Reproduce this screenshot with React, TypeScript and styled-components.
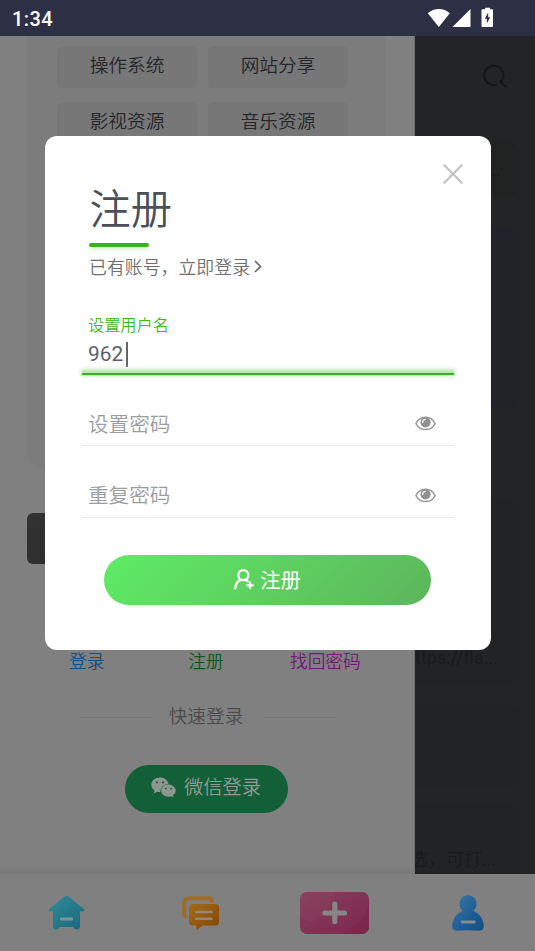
import React from "react";
import styled, { createGlobalStyle } from "styled-components";

const GlobalStyle = createGlobalStyle`
  * { box-sizing: border-box; }
  body {
    margin: 0;
    background: #808080;
    font-family: Roboto, "Noto Sans CJK SC", sans-serif;
    font-weight: 350;
    overflow: hidden;
  }
`;

const Screen = styled.div`
  width: 535px;
  height: 951px;
  display: flex;
  flex-direction: column;
  position: relative;
  overflow: hidden;
`;

const StatusBar = styled.header`
  height: 36px;
  flex: none;
  display: flex;
  align-items: center;
  justify-content: space-between;
  padding: 0 41px 0 12px;
  background: #2d2f45;
  color: #fff;
`;

const Clock = styled.span`
  font-size: 20px;
  line-height: 36px;
  font-weight: 500;
  letter-spacing: 0.4px;
  padding-top: 2px;
`;

const Content = styled.div`
  display: flex;
  height: 838px;
  flex: none;
`;

const Drawer = styled.aside`
  width: 415px;
  flex: none;
  display: flex;
  flex-direction: column;
  padding: 0 0 0 27px;
  background: linear-gradient(#808080 0, #808080 828px, #797979 838px);
  border-right: 1px solid #6f6f6f;
`;

const CategoryPanel = styled.div`
  width: 358px;
  height: 431px;
  padding: 10px 30px 0;
  display: grid;
  grid-template-columns: 140px 140px;
  grid-auto-rows: 42px;
  gap: 13.5px 11px;
  background: #7c7c7c;
  border-radius: 0 0 14px 14px;
`;

const Category = styled.div`
  border-radius: 6px;
  background: #777;
  color: #25272b;
  font-size: 18.7px;
  line-height: 41px;
  text-align: center;
`;

const DarkBanner = styled.div`
  width: 358px;
  height: 51px;
  margin-top: 46px;
  border-radius: 6px;
  background: linear-gradient(135deg, #323232, #1c1c1c);
`;

const AccountLinks = styled.div`
  display: flex;
  margin: 84px 0 0;
  width: 358px;
  height: 28px;
`;

const AccountLink = styled.span<{ $color: string }>`
  flex: 1;
  text-align: center;
  font-size: 17.7px;
  line-height: 29px;
  color: ${(p) => p.$color};
`;

const QuickLogin = styled.div`
  display: flex;
  align-items: center;
  width: 257px;
  height: 28px;
  margin: 26px 0 0 52px;
  color: #4b4b4b;
  font-size: 18.7px;
  justify-content: space-between;
  span { margin: -3px 3px 0 0; }
`;

const Rule = styled.i`
  width: 73px;
  height: 1px;
  margin-top: 3px;
  background: #777;
`;

const WechatButton = styled.div`
  display: flex;
  align-items: center;
  gap: 8px;
  width: 163px;
  height: 48px;
  margin: 35px 0 0 98px;
  padding: 0 0 2px 26px;
  border-radius: 24px;
  background: #135f37;
  color: #949a96;
  font-size: 19.3px;
  line-height: 44px;
  svg { margin-bottom: 1px; }
`;

const Backdrop = styled.main`
  flex: 1;
  display: flex;
  flex-direction: column;
  background: #222425;
  color: #191b1c;
  overflow: hidden;
`;

const SearchRow = styled.div`
  flex: none;
  height: 105px;
  padding: 28px 0 0 68px;
`;

const Ghost = styled.div<{ $height: number; $gap: number; $tone: string; $end?: boolean }>`
  flex: none;
  display: flex;
  align-items: flex-end;
  justify-content: ${(p) => (p.$end ? "flex-end" : "flex-start")};
  width: 105px;
  height: ${(p) => p.$height}px;
  padding: ${(p) => (p.$end ? "0 19px 16px 0" : "0 0 15px")};
  margin-bottom: ${(p) => p.$gap}px;
  border-radius: 0 14px 14px 0;
  background: ${(p) => p.$tone};
  white-space: nowrap;
  font-size: 18px;
  font-weight: 400;
  line-height: 22px;
`;

const ClippedText = styled.span`
  margin-left: -5px;
`;

const NavBar = styled.nav`
  height: 77px;
  flex: none;
  display: grid;
  grid-template-columns: repeat(4, 1fr);
  align-items: center;
  justify-items: center;
  background: #808080;
`;

const Overlay = styled.div`
  position: absolute;
  inset: 0;
  padding: 136px 0 0 44.5px;
`;

const Dialog = styled.form`
  width: 446px;
  height: 514px;
  border-radius: 12px;
  background: #fff;
  display: flex;
  flex-direction: column;
  padding: 28px 28px 0 37px;
`;

const CloseRow = styled.div`
  height: 20px;
  display: flex;
  justify-content: flex-end;
`;

const Title = styled.h1`
  margin: 0 0 0 8px;
  height: 59px;
  font-size: 41.3px;
  line-height: 53px;
  font-weight: 350;
  color: #4b5056;
`;

const Underline = styled.i`
  width: 60px;
  height: 4px;
  margin-left: 7.5px;
  border-radius: 2px;
  background: #37b41b;
  box-shadow: 0 2px 4px rgba(55, 180, 27, 0.25);
`;

const LoginHint = styled.div`
  display: flex;
  align-items: center;
  height: 26px;
  margin: 6px 0 1px 7.5px;
  color: #6f6f6f;
  font-size: 17.9px;
  svg { margin: 1px 0 0 4px; }
`;

const FieldBox = styled.label<{ $active?: boolean }>`
  flex: none;
  display: flex;
  flex-direction: column;
  justify-content: flex-end;
  width: 372px;
  height: ${(p) => (p.$active ? 95 : 71.5)}px;
  border-bottom: ${(p) => (p.$active ? "0" : "1px solid #eee")};
  &:nth-of-type(2) { height: 71px; }
`;

const FieldLabel = styled.span`
  margin-left: 6.5px;
  font-size: 16.2px;
  line-height: 24px;
  color: #41b728;
`;

const FieldValue = styled.span`
  display: flex;
  align-items: center;
  margin-left: 6.5px;
  height: 32px;
  font-size: 20.8px;
  font-weight: 400;
  color: #5b6066;
`;

const Caret = styled.i`
  width: 2px;
  height: 25px;
  margin-left: 3px;
  background: #62666b;
`;

const FocusGlow = styled.i`
  height: 5px;
  background: linear-gradient(#c8ebc3 0, #b9e5b2 3px, #36b31c 3px, #36b31c 4.5px, #fff 5px);
  box-shadow: 0 0 4px 1px #c2eabc;
`;

const Placeholder = styled.span`
  display: flex;
  align-items: center;
  justify-content: space-between;
  height: 45px;
  padding: 0 18px 0 6.5px;
  font-size: 20.6px;
  color: #9a9da0;
  svg { margin-top: 2px; }
`;

const SubmitButton = styled.button`
  width: 327px;
  height: 50px;
  margin: 37.5px 0 0 22.5px;
  border: 0;
  padding: 0;
  border-radius: 25px;
  background: linear-gradient(135deg, #5eec65, #5db55b);
  color: #fff;
  font: inherit;
  font-weight: 400;
  font-size: 20.3px;
  display: flex;
  align-items: center;
  justify-content: center;
  gap: 6px;
  span { padding-bottom: 3px; }
  svg { margin-bottom: 1px; }
`;

const StatusIcons = () => (
  <svg width="67" height="22" viewBox="0 0 67 22" fill="#fff">
    <path d="M.8 6.300C7 .6 17 .6 22.800 6.300L11.800 20Z" />
    <path d="M43.500 2v18H25.500Z" />
    <path d="M58 .7h5v1.500h2q1 0 1 1v15.800q0 1-1 1h-9.500q-1 0-1-1V3.200q0-1 1-1H58Z" />
    <path fill="#2d2f45" d="m61.200 5.500-3.400 6.300h2v4.800l3.400-6.300h-2Z" />
  </svg>
);

const EyeIcon = () => (
  <svg width="21" height="15" viewBox="0 0 21 15">
    <path d="M.9 7.500C5 -1 16 -1 20.100 7.500 16 15.600 5 15.600.9 7.500Z" fill="none" stroke="#959595" strokeWidth="1.500" />
    <circle cx="10.500" cy="6.300" r="5.100" fill="#919191" />
    <path d="M7.600 6.400Q7.500 3.700 10.300 3.300" fill="none" stroke="#fff" strokeWidth="1.200" strokeLinecap="round" />
  </svg>
);

const PersonAddIcon = () => (
  <svg width="20" height="21" viewBox="0 0 20 21" fill="none" stroke="#fff" strokeWidth="2.300" strokeLinecap="round">
    <circle cx="9.300" cy="6.200" r="5" />
    <path d="M1.300 19.300C1.500 15 3.500 12.200 6.500 11.200M12 11.200l1.700 1M13.200 16.300h5.600M16 13.500v5.600" />
  </svg>
);

const WechatIcon = () => (
  <svg width="25" height="21" viewBox="0 0 25 21">
    <path fill="#8d9790" d="M9 .5C4.200.5.300 3.700.300 7.800c0 2.400 1.300 4.400 3.300 5.700l-.8 2.900 3.200-1.700q1.500.5 3.200.4c.3-5 4.200-8.300 8.300-8.400C16.800 3.200 13.300.5 9 .5Z" />
    <path fill="#8d9790" d="M17.200 7.400c-4 0-7.100 2.700-7.100 6.100s3.200 6.200 7.200 6.200q1.400 0 2.600-.5l2.600 1.400-.7-2.300c1.800-1.200 2.900-2.900 2.900-4.800 0-3.400-3.400-6.100-7.500-6.100Z" />
    <g fill="#135f37"><circle cx="6" cy="5.400" r="1.100" /><circle cx="12" cy="5.400" r="1.100" /><circle cx="15" cy="11.600" r=".9" /><circle cx="20" cy="11.600" r=".9" /></g>
  </svg>
);

const HomeIcon = () => (
  <svg width="37" height="35" viewBox="0 0 37 35">
    <defs><linearGradient id="home" x2="1" y2="1"><stop stopColor="#318c99" /><stop offset="1" stopColor="#16687b" /></linearGradient></defs>
    <path fill="url(#home)" d="M16.500 1.500q2-1.500 4 0L36 14q1.200 2-1 2.300h-3V31q0 3.500-3.500 3.500-2.500 0-3-2.500h-14q-.5 2.500-3.500 2.500-3 0-3-3.500V16.300H2Q-.200 16 1 14Z" />
    <rect x="12" y="22.500" width="13" height="3" rx="1" fill="#7e9598" />
  </svg>
);

const ChatIcon = () => (
  <svg width="37" height="34" viewBox="0 0 37 34">
    <defs><linearGradient id="chat" x2="1" y2="1"><stop stopColor="#a46c1d" /><stop offset="1" stopColor="#834500" /></linearGradient></defs>
    <path d="M3.500 20.500Q2.200 20 2.200 17.500V7.500Q2.200 2.200 8 2.200h18.500q3.500 0 3.500 3" fill="none" stroke="#9e6c26" strokeWidth="4" strokeLinecap="round" />
    <path fill="url(#chat)" d="M10.500 8H33q4 0 4 4v13.500q0 4-4 4H20.500L15.500 33.500q-1.500.5-1.300-4h-3.700q-3.500 0-3.500-4V12q0-4 3.500-4Z" />
    <path d="M14 16h15.500M14 22.800h15.500" stroke="#93877a" strokeWidth="2.600" strokeLinecap="round" />
  </svg>
);

const AddIcon = () => (
  <svg width="69" height="42" viewBox="0 0 69 42">
    <defs>
      <linearGradient id="add" x2="1" y2="1"><stop stopColor="#843e5a" /><stop offset="1" stopColor="#7e2850" /></linearGradient>
      <clipPath id="card"><rect width="69" height="42" rx="7" /></clipPath>
    </defs>
    <g clipPath="url(#card)">
      <rect width="69" height="42" fill="url(#add)" />
      <path d="M0 0H36Q31 22 12 29Q5 30 0 24Z" fill="#a45b78" opacity=".13" />
      <path d="M69 8Q66 34 38 42H69Z" fill="#70203f" opacity=".25" />
    </g>
    <path d="M25 21h19.500M34.800 12v17.500" stroke="#868686" strokeWidth="5.200" strokeLinecap="round" />
  </svg>
);

const ProfileIcon = () => (
  <svg width="32" height="36" viewBox="0 0 32 36">
    <defs>
      <linearGradient id="person" x2="1" y2="1"><stop stopColor="#3b78a2" /><stop offset=".55" stopColor="#205e97" /><stop offset="1" stopColor="#154f82" /></linearGradient>
    </defs>
    <path fill="url(#person)" d="M16 .3c5 0 8.500 4 8.500 8.400 0 3.500-1.300 5.500-3.200 7C28 19 31.800 24.500 31.800 31q0 4.800-5 4.800-3.500-.5-10.800-.5t-10.800.5Q.2 35.800.2 31C.2 24.500 4 19 10.700 15.700 8.800 14.200 7.500 12.200 7.500 8.700 7.500 4.300 11 .3 16 .3Z" />
    <path d="M10.200 27h12" stroke="#868e94" strokeWidth="2.800" strokeLinecap="round" />
  </svg>
);

const categories = ["操作系统", "网站分享", "影视资源", "音乐资源"];
const links = [
  { label: "登录", color: "#174d7f" },
  { label: "注册", color: "#0d5717" },
  { label: "找回密码", color: "#721879" },
];

export default function App() {
  return (
    <Screen>
      <GlobalStyle />
      <StatusBar>
        <Clock>1:34</Clock>
        <StatusIcons />
      </StatusBar>
      <Content>
        <Drawer>
          <CategoryPanel>
            {categories.map((name) => <Category key={name}>{name}</Category>)}
          </CategoryPanel>
          <DarkBanner />
          <AccountLinks>
            {links.map((l) => <AccountLink key={l.label} $color={l.color}>{l.label}</AccountLink>)}
          </AccountLinks>
          <QuickLogin><Rule /><span>快速登录</span><Rule /></QuickLogin>
          <WechatButton><WechatIcon /><span>微信登录</span></WechatButton>
        </Drawer>
        <Backdrop>
          <SearchRow>
            <svg width="24" height="25" viewBox="0 0 24 25" fill="none" stroke="#131516" strokeWidth="2" strokeLinecap="round">
              <path d="M12.800 20.700A9.600 9.600 0 1 1 17.700 18L22.200 22.500" />
            </svg>
          </SearchRow>
          <Ghost $height={56} $gap={30} $tone="#202322" $end>...</Ghost>
          <Ghost $height={181} $gap={92} $tone="#212328" />
          <Ghost $height={184} $gap={19} $tone="#212324">ttps://fla...</Ghost>
          <Ghost $height={83} $gap={17} $tone="#212324" />
          <Ghost $height={83} $gap={0} $tone="#212324"><ClippedText>选，可打...</ClippedText></Ghost>
        </Backdrop>
      </Content>
      <NavBar>
        <HomeIcon />
        <ChatIcon />
        <AddIcon />
        <ProfileIcon />
      </NavBar>
      <Overlay>
        <Dialog>
          <CloseRow>
            <svg width="20" height="20" viewBox="0 0 20 20" stroke="#c4c4c4" strokeWidth="2.300" strokeLinecap="round">
              <path d="m1.300 1.300 17.400 17.400M18.700 1.300 1.300 18.700" />
            </svg>
          </CloseRow>
          <Title>注册</Title>
          <Underline />
          <LoginHint>
            已有账号，立即登录
            <svg width="8" height="13" viewBox="0 0 8 13" fill="none" stroke="#666" strokeWidth="1.700"><path d="m1 1 5.500 5.500L1 12" /></svg>
          </LoginHint>
          <FieldBox $active>
            <FieldLabel>设置用户名</FieldLabel>
            <FieldValue>962<Caret /></FieldValue>
            <FocusGlow />
          </FieldBox>
          <FieldBox><Placeholder>设置密码<EyeIcon /></Placeholder></FieldBox>
          <FieldBox><Placeholder>重复密码<EyeIcon /></Placeholder></FieldBox>
          <SubmitButton type="button"><PersonAddIcon /><span>注册</span></SubmitButton>
        </Dialog>
      </Overlay>
    </Screen>
  );
}
